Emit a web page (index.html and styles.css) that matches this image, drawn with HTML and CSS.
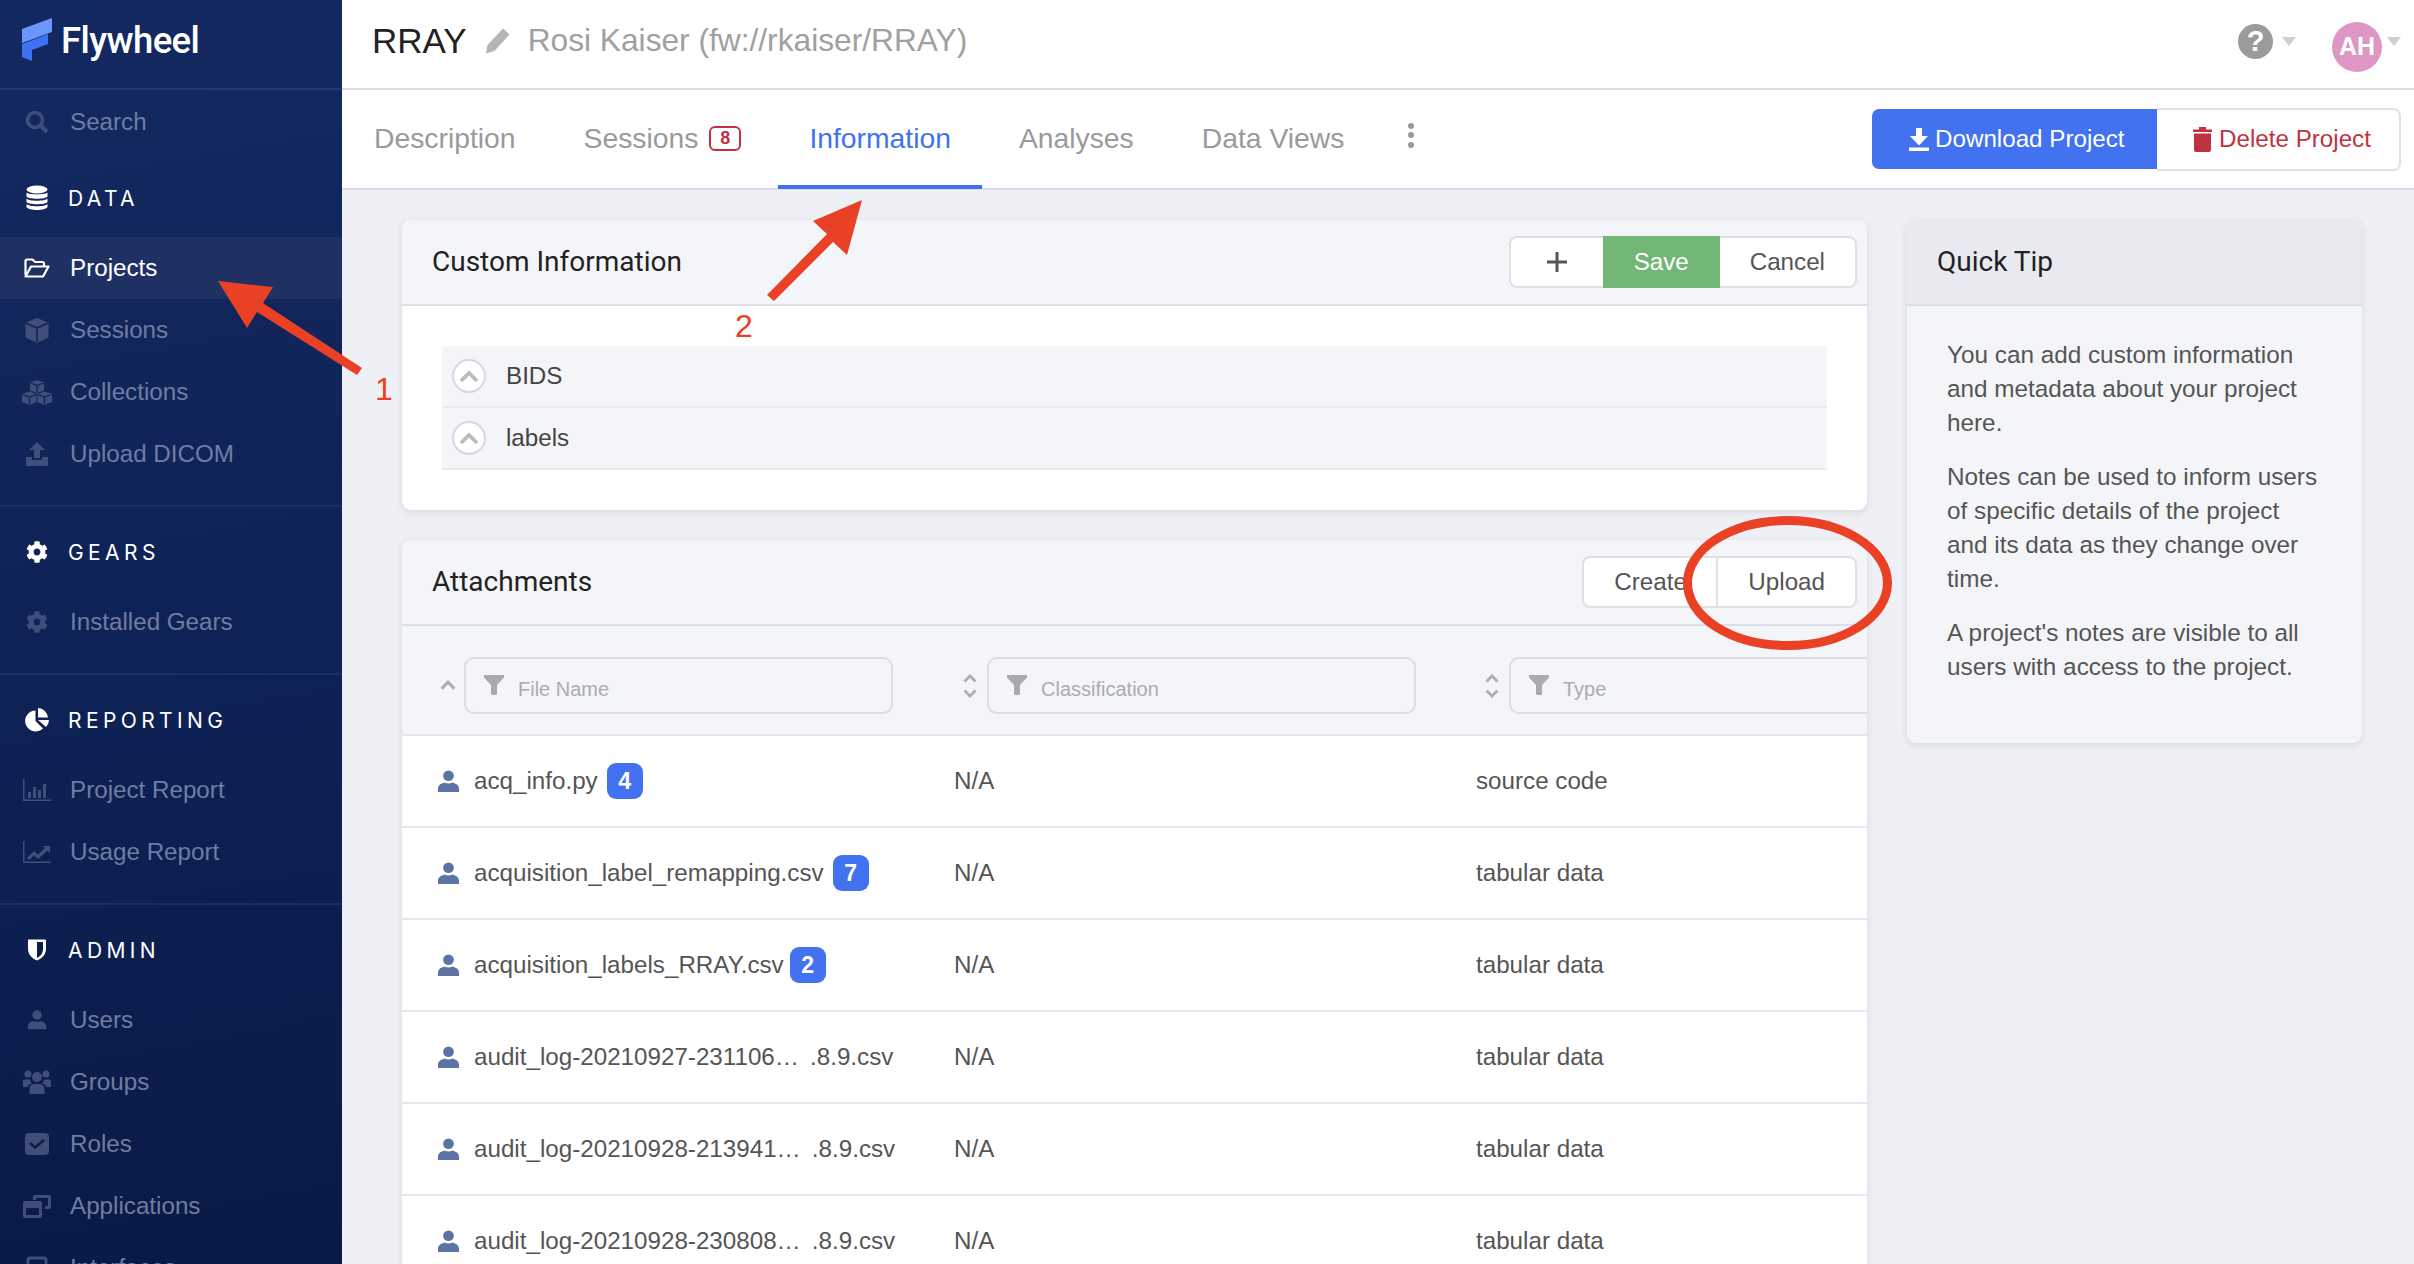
FILE: index.html
```html
<!DOCTYPE html>
<html lang="en">
<head>
<meta charset="utf-8">
<title>RRAY - Flywheel</title>
<link rel="stylesheet" href="styles.css">
</head>
<body>
<svg class="defs" width="0" height="0" aria-hidden="true">
  <defs>
    <symbol id="i-cog" viewBox="0 0 512 512"><path d="M487.4 315.7l-42.6-24.6c4.3-23.2 4.3-47 0-70.2l42.6-24.6c4.9-2.8 7.1-8.6 5.5-14-11.1-35.6-30-67.8-54.7-94.6-3.8-4.1-10-5.1-14.8-2.3L380.8 110c-17.9-15.4-38.5-27.3-60.8-35.1V25.8c0-5.6-3.9-10.5-9.4-11.7-36.7-8.2-74.3-7.8-109.2 0-5.5 1.2-9.4 6.1-9.4 11.7V75c-22.2 7.9-42.8 19.8-60.8 35.1L88.7 85.5c-4.9-2.8-11-1.9-14.8 2.3-24.7 26.7-43.6 58.9-54.7 94.6-1.7 5.4.6 11.2 5.5 14L67.3 221c-4.3 23.2-4.3 47 0 70.2l-42.6 24.6c-4.9 2.8-7.1 8.6-5.5 14 11.1 35.6 30 67.8 54.7 94.6 3.8 4.1 10 5.1 14.8 2.3l42.6-24.6c17.9 15.4 38.5 27.3 60.8 35.1v49.2c0 5.6 3.9 10.5 9.4 11.7 36.7 8.2 74.3 7.8 109.2 0 5.5-1.2 9.4-6.1 9.4-11.7v-49.2c22.2-7.9 42.8-19.8 60.8-35.1l42.6 24.6c4.9 2.8 11 1.9 14.8-2.3 24.7-26.7 43.6-58.9 54.7-94.6 1.5-5.5-.7-11.3-5.6-14.1zM256 336c-44.1 0-80-35.9-80-80s35.9-80 80-80 80 35.9 80 80-35.9 80-80 80z"/></symbol>
    <symbol id="i-user" viewBox="0 0 24 24"><circle cx="12" cy="6" r="5.6"/><path d="M1 23v-3.2C1 15.6 5 13.4 8.4 13.4c1.2.5 2.3.8 3.6.8s2.4-.3 3.6-.8c3.4 0 7.4 2.2 7.4 6.4V23z"/></symbol>
    <symbol id="i-funnel" viewBox="0 0 20 20"><path d="M0 0h20v2.500L13 10v8.500a1.500 1.500 0 0 1-1.500 1.500h-3A1.500 1.500 0 0 1 7 18.500V10L0 2.500z"/></symbol>
    <symbol id="i-sort" viewBox="0 0 14 26"><path d="M1.500 8.500 7 3l5.500 5.500M1.500 17.500 7 23l5.500-5.500" fill="none" stroke="currentColor" stroke-width="2.800"/></symbol>
    <symbol id="i-up" viewBox="0 0 20 12"><path d="M2 10.500 10 2.500l8 8" fill="none" stroke="currentColor" stroke-width="3.800"/></symbol>
  </defs>
</svg>

<aside class="sidebar">
  <div class="logo">
    <svg class="logo-mark" width="32" height="44" viewBox="0 0 32 44"><path fill="#6b97fb" d="M1 11 31 0v14L1 25z"/><path fill="#3f72f0" d="M1 26l26-10v10l-16 6v11L1 39z"/></svg>
    <span class="logo-text">Flywheel</span>
  </div>
  <div class="group group-search">
    <a class="item"><span class="ico"><svg width="24" height="24" viewBox="0 0 24 24"><circle cx="10" cy="10" r="7.500" fill="none" stroke="currentColor" stroke-width="3.500"/><path d="M15.500 15.500 22 22" stroke="currentColor" stroke-width="4.500"/></svg></span>Search</a>
  </div>
  <div class="group">
    <div class="head"><span class="ico"><svg width="22" height="26" viewBox="0 0 22 26" fill="currentColor"><ellipse cx="11" cy="4.500" rx="10.500" ry="4"/><path d="M.5 7.500C2.500 10 19.500 10 21.500 7.500V11.500C19.500 14.500 2.500 14.500.5 11.500zM.5 13.500C2.500 16.500 19.500 16.500 21.500 13.500V17C19.500 20 2.500 20 .5 17zM.5 19C2.500 22 19.500 22 21.500 19V22C19.500 26 2.500 26 .5 22z"/></svg></span><span>DATA</span></div>
    <a class="item active"><span class="ico"><svg width="26" height="20" viewBox="0 0 26 20"><path d="M1.500 17V3a1.500 1.500 0 0 1 1.500-1.500h5.500l2.500 2.500h7.500a1.500 1.500 0 0 1 1.500 1.500v2M1.500 18.500h17.500l5.500-10H7z" fill="none" stroke="currentColor" stroke-width="2.200" stroke-linejoin="round"/></svg></span>Projects</a>
    <a class="item"><span class="ico"><svg width="24" height="25" viewBox="0 0 24 25"><path fill="currentColor" d="M12 0 23.500 4.500v15L12 25 .5 19.500v-15z"/><path d="M1 5l11 5 11-5M12 10v14" fill="none" stroke="#0f2256" stroke-width="1.500"/></svg></span>Sessions</a>
    <a class="item"><span class="ico"><svg width="30" height="25" viewBox="0 0 30 25"><path fill="currentColor" d="M15 0l7 2.500v8L15 13 8 10.500v-8zM7.500 11.500l7 2.500v8l-7 3L0 22v-8zM22.500 11.500 30 14v8l-7.500 3-7-3v-8z"/><path d="M8.500 3 15 5.500 21.500 3M15 5.500V12M.5 14.500l7 2.500 6.500-2.500M7.500 17v7M16 14.500l6.500 2.500 7-2.500M22.500 17v7" fill="none" stroke="#0f2256" stroke-width="1.300"/></svg></span>Collections</a>
    <a class="item"><span class="ico"><svg width="24" height="24" viewBox="0 0 24 24" fill="currentColor"><path d="M12 0l8 8h-5v8H9V8H4zM1 15h6v3h10v-3h6v7.500a1.500 1.500 0 0 1-1.500 1.500h-19A1.500 1.500 0 0 1 1 22.500z"/></svg></span>Upload DICOM</a>
  </div>
  <div class="group">
    <div class="head"><span class="ico"><svg width="22" height="22" fill="currentColor"><use href="#i-cog"/></svg></span><span>GEARS</span></div>
    <a class="item"><span class="ico"><svg width="22" height="22" fill="currentColor"><use href="#i-cog"/></svg></span>Installed Gears</a>
  </div>
  <div class="group">
    <div class="head"><span class="ico"><svg width="24" height="24" viewBox="0 0 24 24" fill="currentColor"><path d="M10.500 2.500V13l7.500 7.500A10.500 10.500 0 1 1 10.500 2.500z"/><path d="M13 0a10.500 10.500 0 0 1 10 9.500H13zM13 12h11a10.500 10.500 0 0 1-3 7z"/></svg></span><span>REPORTING</span></div>
    <a class="item"><span class="ico"><svg width="28" height="22" viewBox="0 0 28 22" fill="currentColor"><path d="M0 0h1.500v20.500H28V22H0z"/><path d="M5 13h3v6H5zM10 8h3v11h-3zM15 11h3v8h-3zM20 5h3v14h-3z"/></svg></span>Project Report</a>
    <a class="item"><span class="ico"><svg width="28" height="22" viewBox="0 0 28 22" fill="currentColor"><path d="M0 0h1.500v20.500H28V22H0z"/><path d="M4 17 11 10l4 3.500L22 7l-2.500-2H27v7l-2.500-2.500L15 18l-4-3.500-5 4.500z"/></svg></span>Usage Report</a>
  </div>
  <div class="group last">
    <div class="head"><span class="ico"><svg width="18" height="22" viewBox="0 0 18 22" fill="currentColor"><path d="M1 .5h16c.5 0 1 .5 1 1V10c0 6-5 10-9 11.500C5 20 0 16 0 10V1.500C0 1 .5.5 1 .5zM9 3v16c3-1.500 6-4.500 6-9V3z" fill-rule="evenodd"/></svg></span><span>ADMIN</span></div>
    <a class="item"><span class="ico"><svg width="20" height="22" fill="currentColor"><use href="#i-user"/></svg></span>Users</a>
    <a class="item"><span class="ico"><svg width="28" height="24" viewBox="0 0 28 24" fill="currentColor"><circle cx="5" cy="4" r="3.500"/><circle cx="23" cy="4" r="3.500"/><circle cx="14" cy="7" r="5"/><path d="M0 9.500h7a6 6 0 0 0 2 4C6.500 14 5 15.500 4.500 17H0zM28 9.500h-7a6 6 0 0 1-2 4c2.500.5 4 2 4.500 3.500H28zM6.500 24v-5c0-3 2.500-5 5-5h5c2.500 0 5 2 5 5v5z"/></svg></span>Groups</a>
    <a class="item"><span class="ico"><svg width="24" height="22" viewBox="0 0 24 22"><rect width="24" height="22" rx="4" fill="currentColor"/><path d="M5 10l5 4.500L19 7" fill="none" stroke="#0b1c4a" stroke-width="2.500"/></svg></span>Roles</a>
    <a class="item"><span class="ico"><svg width="28" height="24" viewBox="0 0 28 24"><path d="M10 6V3a2 2 0 0 1 2-2h14a2 2 0 0 1 2 2v10a2 2 0 0 1-2 2h-4v-3h3V4H13v2z" fill="currentColor"/><path fill="currentColor" d="M2 7h15a2 2 0 0 1 2 2v13a2 2 0 0 1-2 2H2a2 2 0 0 1-2-2V9a2 2 0 0 1 2-2zm1 7v7h13v-7z" fill-rule="evenodd"/></svg></span>Applications</a>
    <a class="item"><span class="ico"><svg width="24" height="24" viewBox="0 0 24 24"><rect x="3" y="2" width="18" height="18" rx="2" fill="none" stroke="currentColor" stroke-width="3"/></svg></span>Interfaces</a>
  </div>
</aside>

<main class="main">
  <header class="topbar">
    <h1 class="title">RRAY</h1>
    <svg class="pencil" width="25" height="26" viewBox="0 0 25 26"><path fill="#b5b5b5" d="M18 .5l6.500 6-15 16.500L1 25.500 2.500 17z"/></svg>
    <span class="subtitle">Rosi Kaiser (fw://rkaiser/RRAY)</span>
    <div class="top-right">
      <span class="help">?</span><span class="caret"></span>
      <span class="avatar">AH</span><span class="caret"></span>
    </div>
  </header>

  <nav class="tabs">
    <a class="tab">Description</a>
    <a class="tab">Sessions<span class="tab-badge">8</span></a>
    <a class="tab current">Information</a>
    <a class="tab">Analyses</a>
    <a class="tab">Data Views</a>
    <a class="kebab"><i></i><i></i><i></i></a>
    <div class="tab-actions">
      <a class="btn-download"><svg width="20" height="23" viewBox="0 0 20 23" fill="#fff"><path d="M7 0h6v8h6l-9 9.500L1 8h6zM0 19.500h20V23H0z"/></svg>Download Project</a>
      <a class="btn-delete"><svg width="19" height="25" viewBox="0 0 19 25" fill="#be333f"><path d="M0 2.500h6V0h7v2.500h6V5H0zM1 6.500h17V23a2 2 0 0 1-2 2H3a2 2 0 0 1-2-2z"/></svg>Delete Project</a>
    </div>
  </nav>

  <div class="content">
    <div class="col-main">
      <section class="card">
        <div class="card-head">
          <h2 class="card-title">Custom Information</h2>
          <div class="btn-group">
            <a class="cell cell-plus"><svg width="20" height="20" viewBox="0 0 20 20"><path d="M10 0v20M0 10h20" stroke="#555" stroke-width="3"/></svg></a>
            <a class="cell cell-save">Save</a>
            <a class="cell">Cancel</a>
          </div>
        </div>
        <div class="info-body">
          <div class="info-row"><span class="circle"><svg width="20" height="13" color="#bcbcbc"><use href="#i-up"/></svg></span>BIDS</div>
          <div class="info-row"><span class="circle"><svg width="20" height="13" color="#bcbcbc"><use href="#i-up"/></svg></span>labels</div>
        </div>
      </section>

      <section class="card card-attach">
        <div class="card-head">
          <h2 class="card-title">Attachments</h2>
          <div class="btn-group">
            <a class="cell cell-create">Create</a>
            <a class="cell cell-upload">Upload</a>
          </div>
        </div>
        <div class="grid filters">
          <div class="filter"><svg class="sort-one" width="16" height="10" color="#adaeb3"><use href="#i-up"/></svg><div class="input"><svg width="20" height="20" fill="#a9aaae"><use href="#i-funnel"/></svg>File Name</div></div>
          <div class="filter"><svg class="sort" width="14" height="26" color="#adaeb3"><use href="#i-sort"/></svg><div class="input"><svg width="20" height="20" fill="#a9aaae"><use href="#i-funnel"/></svg>Classification</div></div>
          <div class="filter"><svg class="sort" width="14" height="26" color="#adaeb3"><use href="#i-sort"/></svg><div class="input"><svg width="20" height="20" fill="#a9aaae"><use href="#i-funnel"/></svg>Type</div></div>
        </div>
        <div class="grid row"><div class="name"><svg width="23" height="23" fill="#5c73a5"><use href="#i-user"/></svg>acq_info.py<span class="badge">4</span></div><div>N/A</div><div>source code</div></div>
        <div class="grid row"><div class="name"><svg width="23" height="23" fill="#5c73a5"><use href="#i-user"/></svg>acquisition_label_remapping.csv<span class="badge">7</span></div><div>N/A</div><div>tabular data</div></div>
        <div class="grid row"><div class="name"><svg width="23" height="23" fill="#5c73a5"><use href="#i-user"/></svg>acquisition_labels_RRAY.csv<span class="badge badge-tight">2</span></div><div>N/A</div><div>tabular data</div></div>
        <div class="grid row"><div class="name"><svg width="23" height="23" fill="#5c73a5"><use href="#i-user"/></svg><span>audit_log-20210927-231106…</span><span class="ext">.8.9.csv</span></div><div>N/A</div><div>tabular data</div></div>
        <div class="grid row"><div class="name"><svg width="23" height="23" fill="#5c73a5"><use href="#i-user"/></svg><span>audit_log-20210928-213941…</span><span class="ext">.8.9.csv</span></div><div>N/A</div><div>tabular data</div></div>
        <div class="grid row"><div class="name"><svg width="23" height="23" fill="#5c73a5"><use href="#i-user"/></svg><span>audit_log-20210928-230808…</span><span class="ext">.8.9.csv</span></div><div>N/A</div><div>tabular data</div></div>
      </section>
    </div>

    <aside class="card tip">
      <div class="tip-head"><h2 class="card-title">Quick Tip</h2></div>
      <div class="tip-body">
        <p>You can add custom information and metadata about your project here.</p>
        <p>Notes can be used to inform users of specific details of the project and its data as they change over time.</p>
        <p>A project's notes are visible to all users with access to the project.</p>
      </div>
    </aside>
  </div>
</main>

<svg class="annot" width="2414" height="1264" viewBox="0 0 2414 1264">
  <path class="mark" d="M218 281 273 287 263 303 362 368 357 375 257 312 247 328z"/>
  <path class="mark" d="M862 200 847 255 833 242 774 301 767 295 827 234 813 221z"/>
  <ellipse class="ring" cx="1787.500" cy="583" rx="100" ry="62.500"/>
  <text class="num" x="375" y="400">1</text>
  <text class="num" x="735" y="337">2</text>
</svg>
</body>
</html>
```

FILE: styles.css
```css
* { box-sizing: border-box; }
html, body { margin: 0; height: 100%; }
body {
  width: 2414px;
  height: 1264px;
  overflow: hidden;
  display: flex;
  position: relative;
  font-family: "Liberation Sans", Arial, sans-serif;
  font-size: 24.2px;
  color: #555;
  background: #eff0f5;
}
a { color: inherit; text-decoration: none; }
h1, h2, p { margin: 0; font-weight: 400; }
.defs { position: absolute; }

/* sidebar */
.sidebar {
  width: 342px;
  height: 1264px;
  flex: none;
  overflow: hidden;
  color: #6f7da0;
  background: linear-gradient(170deg, #132961 0%, #0f2256 50%, #0a1a46 100%);
}
.logo {
  height: 90px;
  display: flex;
  align-items: center;
  padding: 0 0 8px 21px;
  gap: 8px;
  border-bottom: 2px solid #23386f;
}
.logo-mark { flex: none; }
.logo-text {
  font-family: Roboto, sans-serif;
  font-weight: 500;
  font-size: 36.5px;
  letter-spacing: -0.6px;
  color: #fff;
}
.group { padding: 15px 0 20px; border-bottom: 2px solid #1c2f64; }
.group.last { border-bottom: 0; }
.group-search { padding: 1px 0 0; border: 0; }
.item, .head {
  height: 62px;
  display: flex;
  align-items: center;
}
.head {
  margin-bottom: 7px;
  padding-bottom: 2px;
  font-family: Inter, sans-serif;
  font-size: 21px;
  letter-spacing: 4.4px;
  color: #fff;
}
.head .ico { width: 68px; }
.item.active { background: #1f3163; color: #fff; }
.ico {
  width: 70px;
  padding-left: 4px;
  flex: none;
  display: flex;
  justify-content: center;
  color: #3f4f7a;
}
.head .ico { padding-left: 6px; }
.head .ico, .active .ico { color: #fff; }

/* main */
.main { flex: 1; min-width: 0; display: flex; flex-direction: column; }
.topbar {
  height: 90px;
  flex: none;
  display: flex;
  align-items: center;
  padding: 0 0 7px 30px;
  background: #fff;
  border-bottom: 2px solid #d9dce7;
}
.title { font-size: 35px; color: #222; }
.pencil { margin: 0 18px; flex: none; }
.subtitle { font-size: 31.7px; color: #a0a0a0; }
.top-right { margin-left: auto; display: flex; align-items: center; padding-right: 13px; padding-top: 2px; }
.help {
  width: 35px; height: 35px;
  border-radius: 50%;
  background: #9b9b9b;
  color: #fff;
  font-weight: 700;
  font-size: 29px;
  display: flex; align-items: center; justify-content: center;
}
.caret {
  width: 0; height: 0;
  margin-left: 9px;
  border: 7.500px solid transparent;
  border-top: 9px solid #cfcfcf;
  border-bottom: 0;
}
.avatar {
  width: 50px; height: 50px;
  margin: 10px 0 0 36px;
  border-radius: 50%;
  background: #de97c4;
  color: #fff;
  font-weight: 700;
  font-size: 25px;
  display: flex; align-items: center; justify-content: center;
}
.avatar + .caret { margin-left: 5px; }

.tabs {
  height: 100px;
  flex: none;
  display: flex;
  align-items: stretch;
  gap: 6px;
  padding-left: 1px;
  background: #fff;
  border-bottom: 2px solid #d9dce7;
}
.tab {
  display: flex;
  align-items: center;
  gap: 11px;
  padding: 2px 31px 0;
  font-size: 28.3px;
  color: #9a9a9a;
  white-space: pre;
  margin-bottom: -1px;
  border-bottom: 4px solid transparent;
}
.tab.current { color: #4272ef; border-bottom-color: #4272ef; }
.tab-badge {
  width: 32px; height: 25px;
  border: 2px solid #be333f;
  border-radius: 6px;
  color: #be333f;
  font-size: 18px;
  font-weight: 700;
  display: flex; align-items: center; justify-content: center;
}
.kebab {
  margin-left: 27px;
  display: flex;
  flex-direction: column;
  align-self: center;
  gap: 3.500px;
  margin-top: -8px;
}
.kebab i { width: 6px; height: 6px; border-radius: 50%; background: #999; display: block; }
.tab-actions { margin-left: auto; padding-right: 13px; display: flex; align-items: center; }
.btn-download {
  height: 60px;
  width: 285px;
  display: flex; align-items: center;
  gap: 6px;
  padding-left: 37px;
  background: #4272ef;
  color: #fff;
  border-radius: 7px 0 0 7px;
  white-space: nowrap;
}
.btn-delete {
  height: 63px;
  width: 244px;
  display: flex; align-items: center;
  gap: 7px;
  padding-left: 36px;
  background: #fff;
  color: #be333f;
  border: 2px solid #dfe0e4;
  border-left: 0;
  border-radius: 0 8px 8px 0;
  white-space: nowrap;
}

/* content */
.content {
  flex: 1;
  min-height: 0;
  overflow: hidden;
  display: flex;
  align-items: flex-start;
  gap: 40px;
  padding: 30px 0 0 60px;
}
.col-main { width: 1465px; flex: none; display: flex; flex-direction: column; gap: 30px; }
.card {
  background: #fff;
  border-radius: 9px;
  box-shadow: 0 2px 7px rgba(40, 50, 90, .12);
  overflow: hidden;
}
.card-attach { background: #f4f5f9; }
.card-head {
  height: 86px;
  display: flex;
  align-items: center;
  justify-content: space-between;
  padding: 0 10px 0 30px;
  background: #f4f5f9;
  border-bottom: 2px solid #dcdfe9;
}
.card-title { font-family: Roboto, sans-serif; font-size: 28px; color: #222; margin-top: -2px; }
.btn-group {
  height: 52px;
  display: flex;
  align-items: stretch;
  background: #fff;
  border: 2px solid #dfe0e4;
  border-radius: 8px;
}
.cell {
  display: flex;
  align-items: center;
  padding: 0 30px;
  white-space: nowrap;
}
.cell-plus { padding: 0 36px; }
.cell-save {
  width: 117px;
  justify-content: center;
  margin: -2px 0;
  background: #73b777;
  color: #fff;
}
.cell-create { width: 132px; padding-left: 30px; }
.cell-upload { border-left: 2px solid #dfe0e4; }
.info-body { padding: 40px; height: 204px; }
.info-row {
  height: 62px;
  display: flex;
  align-items: center;
  gap: 20px;
  padding-left: 10px;
  background: #f4f5f9;
  border-bottom: 2px solid #e9eaee;
  color: #444;
}
.circle {
  width: 34px; height: 34px;
  border: 2px solid #d5d8e4;
  border-radius: 50%;
  background: #fff;
  display: flex; align-items: center; justify-content: center;
}

/* table */
.grid {
  display: grid;
  grid-template-columns: repeat(3, 522px);
  padding-left: 30px;
}
.filters { height: 110px; padding-top: 11px; border-bottom: 2px solid #e6e7eb; align-items: center; }
.filter { display: flex; align-items: center; padding-left: 9px; }
.sort { margin-right: 10px; flex: none; }
.sort-one { margin-right: 8px; margin-left: -1px; flex: none; margin-bottom: 2px; }
.input {
  width: 429px;
  height: 57px;
  flex: none;
  display: flex;
  align-items: center;
  gap: 18px;
  padding: 7px 0 0 18px;
  border: 2px solid #dcdde2;
  border-radius: 10px;
  font-size: 20px;
  color: #acacac;
  line-height: 1;
}
.input svg { margin-top: -9px; margin-right: -4px; flex: none; }
.row {
  height: 92px;
  align-items: center;
  background: #fff;
  border-bottom: 2px solid #e6e7eb;
}
.name { display: flex; align-items: center; padding-left: 5px; white-space: nowrap; }
.name > svg { margin-right: 14px; flex: none; }
.badge {
  width: 36px; height: 36px;
  margin-left: 9px;
  border-radius: 9px;
  background: #4272ef;
  color: #fff;
  font-weight: 700;
  font-size: 23px;
  display: flex; align-items: center; justify-content: center;
}
.badge-tight { margin-left: 6px; }
.ext { margin-left: 11px; }

/* quick tip */
.tip { width: 455px; flex: none; background: #f4f5f9; }
.tip-head {
  height: 86px;
  display: flex;
  align-items: center;
  padding-left: 30px;
  background: #e9eaef;
  border-bottom: 2px solid #dcdfe9;
}
.tip-body { padding: 32px 43px 39px 40px; font-size: 24.3px; line-height: 34px; }
.tip-body p { margin-bottom: 20px; }

/* annotations drawn over the page */
.annot { position: absolute; left: 0; top: 0; pointer-events: none; }
.mark { fill: #ea4025; }
.ring { fill: none; stroke: #ea4025; stroke-width: 9; }
.num { fill: #ea4025; font-family: "Liberation Sans", sans-serif; font-size: 32px; }
```
